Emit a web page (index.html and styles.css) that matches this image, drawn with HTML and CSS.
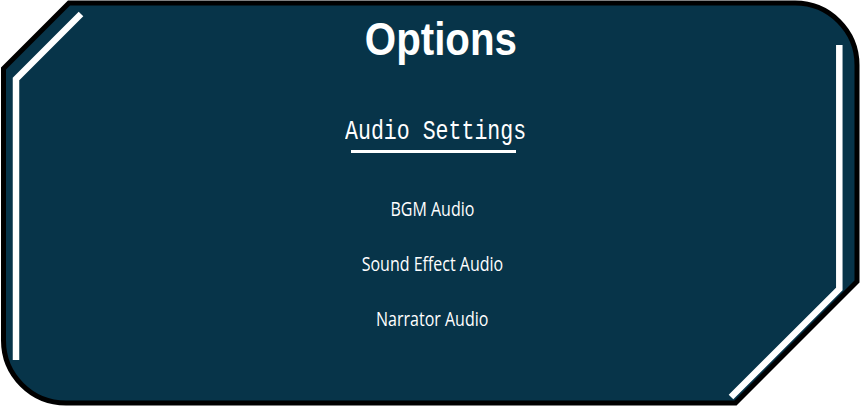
FILE: index.html
```html
<!DOCTYPE html>
<html lang="en">
<head>
<meta charset="utf-8">
<title>Options</title>
<link rel="stylesheet" href="styles.css">
</head>
<body>
<div class="panel">
  <svg class="frame" width="861" height="407" viewBox="0 0 861 407" aria-hidden="true">
    <path class="frame-body" d="M69,3 L795,3 A62,62 0 0 1 857,65 L857,281.5 L735.5,403 L66,403 A62.5,62.5 0 0 1 3.5,340.5 L3.5,68.5 Z"/>
    <path class="frame-accent" d="M81,14 L16,79 L16,360"/>
    <path class="frame-accent" d="M839.3,45 L839.3,289 L731,397"/>
  </svg>
  <div class="content">
    <h1 class="title">Options</h1>
    <h2 class="section">Audio Settings</h2>
    <div class="rule"></div>
    <ul class="labels">
      <li class="label">BGM Audio</li>
      <li class="label">Sound Effect Audio</li>
      <li class="label">Narrator Audio</li>
    </ul>
  </div>
</div>
</body>
</html>
```

FILE: styles.css
```css
html, body {
  margin: 0;
  padding: 0;
  background: #ffffff;
}

.panel {
  position: relative;
  width: 861px;
  height: 407px;
  overflow: hidden;
}

.frame {
  position: absolute;
  left: 0;
  top: 0;
}

.frame-body {
  fill: #073449;
  stroke: #000000;
  stroke-width: 5;
  stroke-linejoin: miter;
}

.frame-accent {
  fill: none;
  stroke: #ffffff;
  stroke-width: 6.5;
  stroke-linejoin: miter;
  stroke-linecap: butt;
}

.content {
  position: relative;
  display: flex;
  flex-direction: column;
  align-items: center;
  color: #ffffff;
}

.title {
  margin: 13px 0 0 20px;
  font-family: "Liberation Sans", Arial, sans-serif;
  font-weight: bold;
  font-size: 46px;
  line-height: 52px;
  transform: scaleX(0.875);
}

.section {
  margin: 50.5px 0 0 11px;
  font-family: "Liberation Mono", "DejaVu Sans Mono", monospace;
  font-weight: normal;
  font-size: 28px;
  line-height: 32px;
  white-space: pre;
  transform: scaleX(0.77);
}

.rule {
  width: 165px;
  height: 3px;
  margin: 2.5px 0 0 6px;
  background: #ffffff;
}

.labels {
  list-style: none;
  margin: 41.7px 0 0 3px;
  padding: 0;
  display: flex;
  flex-direction: column;
  align-items: center;
  gap: 28px;
}

.label {
  font-family: "Open Sans", "Noto Sans", sans-serif;
  font-size: 20px;
  line-height: 27px;
  white-space: nowrap;
  transform: scaleX(0.8);
}
```
